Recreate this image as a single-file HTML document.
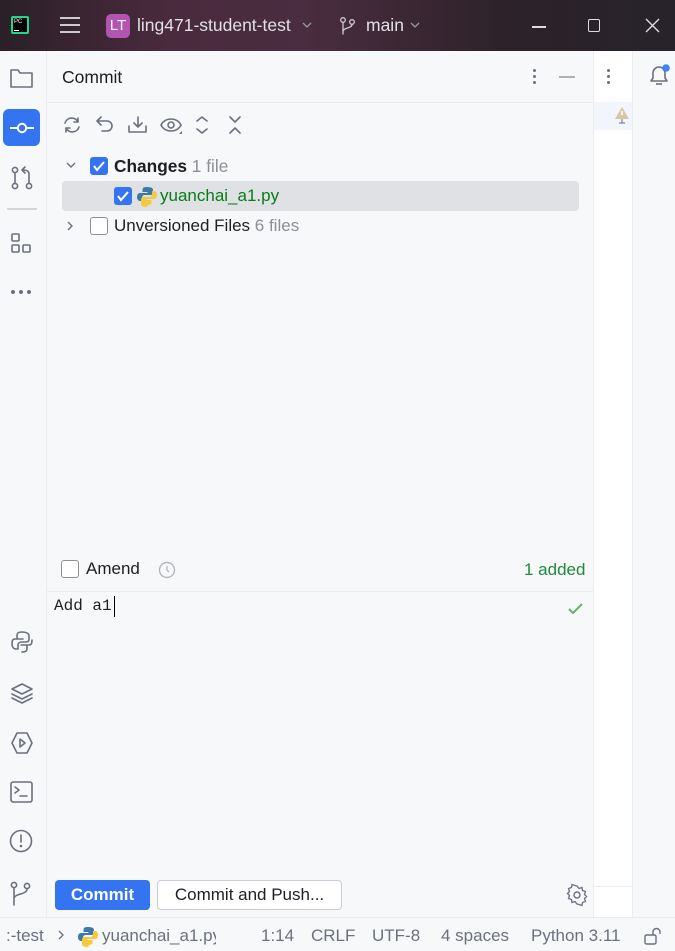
<!DOCTYPE html>
<html><head><meta charset="utf-8"><style>
*{box-sizing:border-box;margin:0;padding:0}
body{width:675px;height:951px;overflow:hidden;font-family:"Liberation Sans",sans-serif;background:#f7f8fa;position:relative;color:#1e1f22}
.abs{position:absolute}
.title{left:0;top:0;width:675px;height:51px;background:linear-gradient(90deg,#2b2027 0%,#4a2a3e 25%,#4a2d40 45%,#2d2229 75%,#27232a 100%);color:#dfe1e5}
.cb{position:absolute;width:18px;height:18px;border-radius:3px}
.cb.on{background:#3574f0}
.cb.off{border:1.5px solid #8c8f96;background:#fff}
svg{position:absolute;overflow:visible}
.ic{fill:none;stroke:#6c707e;stroke-width:1.6;stroke-linecap:round;stroke-linejoin:round}
</style></head><body>
<div class="abs title">
  <div class="abs" style="left:11px;top:16px;width:18px;height:18px;background:#21d789;border-radius:2px"></div>
  <div class="abs" style="left:13px;top:18px;width:14px;height:14px;background:#fcf84a"></div>
  <div class="abs" style="left:13px;top:18px;width:14px;height:14px;background:#000;color:#fff;font-size:6px;padding:1px">PC<div style="width:5px;height:1px;background:#fff;margin-top:5px"></div></div>
  <div class="abs" style="left:60px;top:17px;width:20px;height:2px;background:#ccc;box-shadow:0 7px 0 #ccc,0 14px 0 #ccc"></div>
  <div class="abs" style="left:106px;top:14px;width:24px;height:24px;border-radius:5px;background:#b354b3;color:#fff;font-size:15px;line-height:24px;text-align:center">LT</div>
  <div class="abs" style="left:137px;top:15px;font-size:17.5px">ling471-student-test</div>
  <svg style="left:302px;top:22px" width="10" height="6"><path d="M1 1l4 4 4-4" stroke="#999" fill="none" stroke-width="1.3"/></svg>
  <svg style="left:340px;top:17px" width="16" height="18"><circle cx="3" cy="3" r="2.3" stroke="#ccc" fill="none" stroke-width="1.3"/><circle cx="12" cy="5" r="2.3" stroke="#ccc" fill="none" stroke-width="1.3"/><path d="M3 5.5v12M12 7.5c0 4-9 3-9 7" stroke="#ccc" fill="none" stroke-width="1.3"/></svg>
  <div class="abs" style="left:366px;top:15px;font-size:17.5px">main</div>
  <svg style="left:410px;top:22px" width="10" height="6"><path d="M1 1l4 4 4-4" stroke="#999" fill="none" stroke-width="1.3"/></svg>
  <div class="abs" style="left:532px;top:26px;width:14px;height:1.5px;background:#ddd"></div>
  <div class="abs" style="left:588px;top:19px;width:12px;height:13px;border:1.5px solid #ddd;border-radius:2px"></div>
  <svg style="left:646px;top:19px" width="13" height="13"><path d="M0 0l13 13M13 0L0 13" stroke="#ddd" stroke-width="1.4"/></svg>
</div>
<div class="abs" style="left:46px;top:51px;width:1px;height:866px;background:#ebecf0"></div>
<svg style="left:10px;top:67px" width="24" height="22"><path class="ic" d="M1 3h7l2 3h12v14H1z"/></svg>
<div class="abs" style="left:3px;top:109px;width:37px;height:37px;border-radius:6px;background:#3574f0"></div>
<svg style="left:9px;top:120px" width="26" height="16"><path d="M1 8h7M18 8h7" stroke="#fff" stroke-width="2"/><circle cx="13" cy="8" r="4.2" fill="none" stroke="#fff" stroke-width="2"/></svg>
<svg style="left:11px;top:166px" width="22" height="24"><g class="ic"><circle cx="4" cy="4" r="2.6"/><circle cx="4" cy="20" r="2.6"/><circle cx="18" cy="20" r="2.6"/><path d="M4 7v10M18 17V8c0-3-3-4-6-4M14 1l-3 3 3 3"/></g></svg>
<div class="abs" style="left:7px;top:208px;width:30px;height:2px;background:#d3d5db"></div>
<svg style="left:11px;top:233px" width="22" height="20"><g class="ic"><rect x="1" y="1" width="7" height="7" rx="1"/><rect x="1" y="12" width="7" height="7" rx="1"/><rect x="12" y="12" width="7" height="7" rx="1"/></g></svg>
<div class="abs" style="left:11px;top:290px;width:4px;height:4px;border-radius:2px;background:#6c707e;box-shadow:8px 0 0 #6c707e,16px 0 0 #6c707e"></div>
<svg style="left:10px;top:630px" width="24" height="24"><g class="ic"><path d="M12 2c-5 0-5 2-5 4v3h6M7 9H5c-3 0-3 3-3 5s1 5 4 5h2v-4c0-2 2-3 4-3h4c2 0 3-1 3-3V6c0-2-2-4-7-4M12 22c5 0 5-2 5-4v-3h-6M17 15h2c3 0 3-3 3-5"/></g></svg>
<svg style="left:10px;top:682px" width="24" height="22"><g class="ic"><path d="M12 2l10 5-10 5-10-5zM2 12l10 5 10-5M2 16l10 5 10-5"/></g></svg>
<svg style="left:10px;top:731px" width="24" height="24"><g class="ic"><path d="M7 2h10l5 10-5 10H7L2 12z"/><path d="M10 8l5 4-5 4z"/></g></svg>
<svg style="left:10px;top:781px" width="24" height="22"><g class="ic"><rect x="1" y="1" width="21" height="20" rx="2"/><path d="M5 6l4 3-4 3M10 15h7"/></g></svg>
<svg style="left:9px;top:829px" width="26" height="26"><g class="ic"><circle cx="12" cy="12" r="10.5"/><path d="M12 6v7"/></g><circle cx="12" cy="17" r="1.3" fill="#6c707e"/></svg>
<svg style="left:10px;top:881px" width="24" height="26"><g class="ic"><circle cx="4" cy="4" r="2.6"/><circle cx="17" cy="5" r="2.6"/><path d="M4 7v17M17 8c0 6-13 4-13 10"/></g></svg>
<div class="abs" style="left:62px;top:67px;font-size:17.5px;font-weight:500">Commit</div>
<div class="abs" style="left:533px;top:69px;width:3px;height:3px;border-radius:2px;background:#6c707e;box-shadow:0 6px 0 #6c707e,0 12px 0 #6c707e"></div>
<div class="abs" style="left:559px;top:76px;width:16px;height:2px;background:#aeb0b6"></div>
<div class="abs" style="left:47px;top:102px;width:546px;height:1px;background:#ebecf0"></div>
<svg style="left:62px;top:116px" width="20" height="18"><g class="ic"><path d="M3 7a7 7 0 0 1 13-1M17 11a7 7 0 0 1-13 1M16 2v4h-4M4 16v-4h4"/></g></svg>
<svg style="left:96px;top:116px" width="18" height="18"><g class="ic"><path d="M5 1L1 5l4 4M1 5h10a5 5 0 0 1 0 10H6"/></g></svg>
<svg style="left:128px;top:116px" width="20" height="18"><g class="ic"><path d="M10 1v10M6 7l4 4 4-4M1 10v6h17v-6"/></g></svg>
<svg style="left:160px;top:117px" width="24" height="18"><g class="ic"><path d="M1 8c4-8 16-8 20 0-4 8-16 8-20 0z"/><circle cx="11" cy="8" r="3"/></g><path d="M19 17l3-3v3z" fill="#6c707e"/></svg>
<svg style="left:196px;top:116px" width="12" height="18"><g class="ic"><path d="M1 5l5-4 5 4M1 13l5 4 5-4"/></g></svg>
<svg style="left:229px;top:116px" width="12" height="18"><g class="ic"><path d="M1 1l5 5 5-5M1 17l5-5 5 5"/></g></svg>
<svg style="left:66px;top:162px" width="10" height="6"><path d="M1 1l4 4 4-4" stroke="#6c707e" fill="none" stroke-width="1.4"/></svg>
<div class="cb on" style="left:90px;top:157px"></div>
<svg style="left:93px;top:161px" width="12" height="10"><path d="M1 5l3 4 7-8" stroke="#fff" fill="none" stroke-width="2"/></svg>
<div class="abs" style="left:114px;top:156px;font-size:17.3px"><b style="font-weight:600">Changes</b> <span style="color:#8c8f96">1 file</span></div>
<div class="abs" style="left:62px;top:181px;width:517px;height:30px;border-radius:4px;background:#dfe1e5"></div>
<div class="cb on" style="left:114px;top:187px"></div>
<svg style="left:117px;top:191px" width="12" height="10"><path d="M1 5l3 4 7-8" stroke="#fff" fill="none" stroke-width="2"/></svg>
<svg style="left:137px;top:186px" width="20" height="20"><path d="M9.5 1c-4 0-4 2-4 3v2h5v1H3c-2 0-3 2-3 4s1 4 3 4h2v-3c0-2 1-3 3-3h5c2 0 3-1 3-3V4c0-2-2-3-6.5-3z" fill="#3c78aa"/><path d="M10.5 19c4 0 4-2 4-3v-2h-5v-1H17c2 0 3-2 3-4s-1-4-3-4h-2v3c0 2-1 3-3 3H7c-2 0-3 1-3 3v4c0 2 2 3 6.5 3z" fill="#f5c93b"/></svg>
<div class="abs" style="left:160px;top:186px;font-size:17px;color:#067d17">yuanchai_a1.py</div>
<svg style="left:67px;top:221px" width="6" height="10"><path d="M1 1l4 4-4 4" stroke="#6c707e" fill="none" stroke-width="1.4"/></svg>
<div class="cb off" style="left:90px;top:217px"></div>
<div class="abs" style="left:114px;top:216px;font-size:17px">Unversioned Files <span style="color:#8c8f96">6 files</span></div>
<div class="cb off" style="left:61px;top:560px"></div>
<div class="abs" style="left:86px;top:559px;font-size:17px">Amend</div>
<svg style="left:158px;top:561px" width="18" height="18"><circle cx="9" cy="9" r="7.5" fill="none" stroke="#b4b6bc" stroke-width="1.4"/><path d="M9 5v4l2 2" stroke="#b4b6bc" fill="none" stroke-width="1.3"/></svg>
<div class="abs" style="left:524px;top:560px;font-size:17px;color:#208a3c">1 added</div>
<div class="abs" style="left:47px;top:591px;width:546px;height:1px;background:#ebecf0"></div>
<div class="abs" style="left:54px;top:597px;font-family:'Liberation Mono',monospace;font-size:16px">Add a1</div>
<div class="abs" style="left:114px;top:596px;width:1px;height:21px;background:#000"></div>
<svg style="left:568px;top:602px" width="16" height="13"><path d="M1 7l4 4 9-9" stroke="#5fb865" fill="none" stroke-width="2"/></svg>
<div class="abs" style="left:55px;top:880px;width:95px;height:30px;border-radius:4px;background:#3574f0;color:#fff;font-size:17px;font-weight:600;text-align:center;line-height:30px">Commit</div>
<div class="abs" style="left:157px;top:880px;width:185px;height:30px;border-radius:4px;background:#fff;border:1px solid #c9ccd6;font-size:17px;text-align:center;line-height:28px">Commit and Push...</div>
<svg style="left:567px;top:885px" width="20" height="20"><circle cx="10" cy="10" r="3" fill="none" stroke="#6c707e" stroke-width="1.4"/><path d="M10 1l2 2.5 3-1 .5 3 3 1-1 3 2 2-2 2 1 3-3 1-.5 3-3-1L10 19l-2-2.5-3 1-.5-3-3-1 1-3-2-2 2-2-1-3 3-1 .5-3 3 1z" fill="none" stroke="#6c707e" stroke-width="1.3"/></svg>
<div class="abs" style="left:593px;top:51px;width:1px;height:866px;background:#ebecf0"></div>
<div class="abs" style="left:594px;top:51px;width:38px;height:866px;background:#fff"></div>
<div class="abs" style="left:594px;top:102px;width:38px;height:28px;background:#f2f5fc"></div>
<div class="abs" style="left:594px;top:886px;width:38px;height:1px;background:#ebecf0"></div>
<div class="abs" style="left:632px;top:51px;width:1px;height:866px;background:#ebecf0"></div>
<div class="abs" style="left:607px;top:69px;width:3px;height:3px;border-radius:2px;background:#6c707e;box-shadow:0 6px 0 #6c707e,0 12px 0 #6c707e"></div>
<svg style="left:614px;top:106px" width="16" height="18"><path d="M8 1l7 12H1z" fill="#d4c8a4"/><path d="M8 5v4" stroke="#fff" stroke-width="1.6"/><path d="M8 13v4M5 17h6" stroke="#6c707e" stroke-width="1"/></svg>
<svg style="left:648px;top:63px" width="22" height="26"><path d="M3 18h16l-2-3V10a6 6 0 0 0-12 0v5z" fill="none" stroke="#6c707e" stroke-width="1.6" stroke-linejoin="round"/><path d="M8 21h6" stroke="#6c707e" stroke-width="1.6"/><circle cx="18" cy="5" r="3.8" fill="#3d86f5"/></svg>
<div class="abs" style="left:0;top:917px;width:675px;height:34px;background:#f7f8fa;border-top:1px solid #ebecf0;color:#6c707e;font-size:17px">
  <div class="abs" style="left:6px;top:8px">:-test</div>
  <svg style="left:58px;top:12px" width="6" height="10"><path d="M1 1l4 4-4 4" stroke="#6c707e" fill="none" stroke-width="1.3"/></svg>
  <svg style="left:78px;top:8px" width="20" height="20"><path d="M9.5 1c-4 0-4 2-4 3v2h5v1H3c-2 0-3 2-3 4s1 4 3 4h2v-3c0-2 1-3 3-3h5c2 0 3-1 3-3V4c0-2-2-3-6.5-3z" fill="#3c78aa"/><path d="M10.5 19c4 0 4-2 4-3v-2h-5v-1H17c2 0 3-2 3-4s-1-4-3-4h-2v3c0 2-1 3-3 3H7c-2 0-3 1-3 3v4c0 2 2 3 6.5 3z" fill="#f5c93b"/></svg>
  <div class="abs" style="left:102px;top:8px;width:114px;overflow:hidden;white-space:nowrap">yuanchai_a1.py</div>
  <div class="abs" style="left:261px;top:8px">1:14</div>
  <div class="abs" style="left:311px;top:8px">CRLF</div>
  <div class="abs" style="left:372px;top:8px">UTF-8</div>
  <div class="abs" style="left:441px;top:8px">4 spaces</div>
  <div class="abs" style="left:531px;top:8px">Python 3.11</div>
  <svg style="left:644px;top:9px" width="18" height="18"><rect x="1" y="8" width="11" height="9" rx="1.5" fill="none" stroke="#6c707e" stroke-width="1.4"/><path d="M9 8V5a3.5 3.5 0 0 1 7 0v2" fill="none" stroke="#6c707e" stroke-width="1.4"/></svg>
</div>
</body></html>
